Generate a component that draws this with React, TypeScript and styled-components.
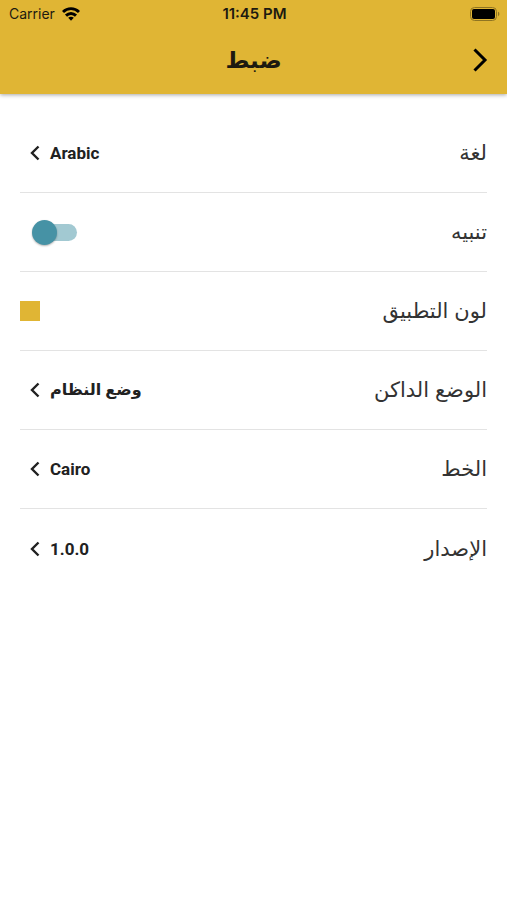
import React, { useId } from 'react';
import styled, { createGlobalStyle } from 'styled-components';

const Global = createGlobalStyle`
  * { box-sizing: border-box; }
  body {
    margin: 0;
    background: #fff;
    color: #212121;
    font-family: "Inter", "DejaVu Sans", sans-serif;
  }
`;

const Header = styled.header`
  background: #e0b534;
  color: #1d1a10;
  box-shadow: 0 1px 4px rgba(0, 0, 0, 0.35);
`;

const StatusBar = styled.div`
  display: grid;
  grid-template-columns: 1fr auto 1fr;
  align-items: center;
  height: 27px;
  padding: 0 7px 0 9px;
  font-size: 14px;
`;

const Carrier = styled.span`
  display: flex;
  align-items: center;
  gap: 7px;
`;

const Clock = styled.span`
  font-size: 15px;
  font-weight: 600;
`;

const Battery = styled.svg`
  justify-self: end;
`;

const TitleBar = styled.div`
  display: grid;
  grid-template-columns: 1fr auto 1fr;
  align-items: center;
  height: 67px;
  padding: 0 16px 2px;
`;

const BackButton = styled.button`
  display: flex;
  justify-self: start;
  padding: 0;
  border: 0;
  background: none;
  color: #000;
  cursor: pointer;
`;

const Title = styled.h1`
  margin: 0;
  font-size: 23px;
  line-height: 40px;
  font-weight: 700;
`;

const List = styled.main`
  padding: 20px;
`;

const Row = styled.div`
  display: flex;
  align-items: center;
  justify-content: space-between;
  min-height: 79px;
  border-bottom: 1px solid #e3e3e3;

  &:last-child {
    border-bottom: 0;
  }
`;

const Label = styled.label`
  color: #333;
  font-size: 21px;
  line-height: 32px;
`;

const Value = styled.button<{ $script?: 'latin' | 'arabic' }>`
  display: flex;
  align-items: center;
  gap: 10px;
  padding: 0 0 0 10px;
  border: 0;
  background: none;
  color: #212121;
  font-family: "Roboto", "DejaVu Sans", sans-serif;
  font-size: ${({ $script }) => ($script === 'arabic' ? 16 : 17)}px;
  font-weight: 700;
  line-height: 32px;
  cursor: pointer;
`;

const Switch = styled.input`
  appearance: none;
  display: flex;
  align-items: center;
  width: 38px;
  height: 17px;
  margin: 0 0 0 19px;
  border-radius: 9px;
  background: #a2c9d2;
  cursor: pointer;

  &::before {
    content: '';
    flex: none;
    width: 25px;
    height: 25px;
    margin-inline-start: -7px;
    border-radius: 50%;
    background: #4692a5;
    box-shadow: 0 1px 2px rgba(0, 0, 0, 0.3);
  }

  &:not(:checked)::before {
    margin-inline-start: 20px;
  }
`;

const Swatch = styled.button`
  width: 20px;
  height: 20px;
  padding: 0;
  border: 0;
  background: #e0b534;
  cursor: pointer;
`;

function Setting({ label, value, script = 'latin' }: { label: string; value: string; script?: 'latin' | 'arabic' }) {
  const id = useId();
  return (
    <Row>
      <Label htmlFor={id}>{label}</Label>
      <Value id={id} type="button" $script={script}>
        {value}
        <svg width="10" height="16" viewBox="0 0 10 16" fill="none" stroke="currentColor" strokeWidth="2.4" aria-hidden="true">
          <path d="M8.500 1.500 2 8l6.500 6.500" />
        </svg>
      </Value>
    </Row>
  );
}

export default function App() {
  return (
    <div dir="rtl" lang="ar">
      <Global />
      <Header>
        <StatusBar dir="ltr">
          <Carrier>
            Carrier
            <svg width="18" height="14" viewBox="0 0 18 14" fill="none" stroke="#000" strokeWidth="2.9" aria-hidden="true">
              <path d="M1 5C5.500.5 12.500.5 17 5" />
              <path d="M4 8.600C6.900 5.700 11.100 5.700 14 8.600" />
              <path d="M6.200 10.800C7.900 9.300 10.100 9.300 11.800 10.800L9 13.700Z" fill="#000" stroke="none" />
            </svg>
          </Carrier>
          <Clock>11:45 PM</Clock>
          <Battery width="30" height="14" viewBox="0 0 30 14" aria-hidden="true">
            <rect x="0.500" y="0.500" width="26" height="13" rx="4" fill="none" stroke="#8f7422" />
            <rect x="2" y="2" width="23" height="10" rx="2" fill="#000" />
            <path d="M28 4.800C29.800 5.400 29.800 8.600 28 9.200Z" fill="#8f7422" />
          </Battery>
        </StatusBar>
        <TitleBar>
          <BackButton type="button" aria-label="رجوع">
            <svg width="20" height="26" viewBox="0 0 20 26" fill="none" stroke="currentColor" strokeWidth="3" aria-hidden="true">
              <path d="M3.500 2.500 14 13 3.500 23.500" />
            </svg>
          </BackButton>
          <Title>ضبط</Title>
        </TitleBar>
      </Header>
      <List>
        <Setting label="لغة" value="Arabic" />
        <Row>
          <Label htmlFor="alerts">تنبيه</Label>
          <Switch id="alerts" type="checkbox" role="switch" dir="ltr" defaultChecked />
        </Row>
        <Row>
          <Label htmlFor="app-color">لون التطبيق</Label>
          <Swatch id="app-color" type="button" />
        </Row>
        <Setting label="الوضع الداكن" value="وضع النظام" script="arabic" />
        <Setting label="الخط" value="Cairo" />
        <Setting label="الإصدار" value="1.0.0" />
      </List>
    </div>
  );
}
